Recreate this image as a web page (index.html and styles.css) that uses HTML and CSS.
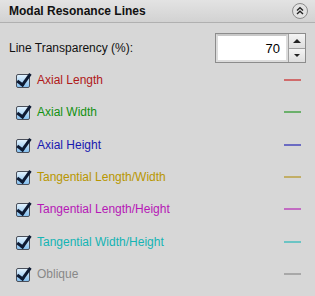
FILE: index.html
```html
<!DOCTYPE html>
<html lang="en">
<head>
    <meta charset="UTF-8">
    <title>Modal Resonance Lines</title>
    <link rel="stylesheet" href="styles.css">
</head>
<body>

<div class="panel">
    <div class="panel-header">
        <span class="panel-title">Modal Resonance Lines</span>
        <span class="collapse-btn">
            <svg width="16" height="16" viewBox="0 0 16 16">
                <circle cx="8" cy="8" r="7.5" fill="#e2e2e2" stroke="#8a8a8a"/>
                <path d="M5 7.5 L8 4.8 L11 7.5 M5 11 L8 8.3 L11 11" fill="none" stroke="#222" stroke-width="1.4"/>
            </svg>
        </span>
    </div>

    <div class="panel-body">
        <div class="transparency-row">
            <span class="label">Line Transparency (%):</span>
            <div class="spinner">
                <div class="spinner-field"><span>70</span></div>
                <div class="spinner-arrows">
                    <span class="arrow up"></span>
                    <span class="arrow down"></span>
                </div>
            </div>
        </div>

        <ul class="line-list">
            <li><span class="check"></span><span class="name axial-length">Axial Length</span><span class="swatch" style="background:#d06b6b"></span></li>
            <li><span class="check"></span><span class="name axial-width">Axial Width</span><span class="swatch" style="background:#6bb06b"></span></li>
            <li><span class="check"></span><span class="name axial-height">Axial Height</span><span class="swatch" style="background:#6b6bc2"></span></li>
            <li><span class="check"></span><span class="name tang-lw">Tangential Length/Width</span><span class="swatch" style="background:#c2ae66"></span></li>
            <li><span class="check"></span><span class="name tang-lh">Tangential Length/Height</span><span class="swatch" style="background:#c26bc2"></span></li>
            <li><span class="check"></span><span class="name tang-wh">Tangential Width/Height</span><span class="swatch" style="background:#6bc4c4"></span></li>
            <li><span class="check"></span><span class="name oblique">Oblique</span><span class="swatch" style="background:#a8a8a8"></span></li>
        </ul>
    </div>
</div>

</body>
</html>
```

FILE: styles.css
```css
body {
    margin: 0;
    padding: 0;
    background-color: #d7d7d7;
    font-family: "Liberation Sans", Arial, sans-serif;
    font-size: 12px;
    color: #000;
}

.panel {
    width: 315px;
    height: 296px;
    background-color: #d7d7d7;
}

.panel-header {
    height: 22px;
    display: flex;
    align-items: center;
    justify-content: space-between;
    padding: 0 9px;
    background: linear-gradient(#e3e3e3, #d2d2d2);
    border-bottom: 1px solid #b0b0b0;
}

.panel-title {
    font-weight: bold;
    font-size: 12px;
    color: #111;
}

.collapse-btn {
    display: flex;
    margin-right: -2px;
}

.panel-body {
    padding: 10px 14px 0 9px;
}

.transparency-row {
    display: flex;
    align-items: center;
    justify-content: space-between;
    height: 30px;
}

.label {
    color: #111;
}

.spinner {
    display: flex;
    border: 1px solid #8c8c8c;
    height: 28px;
    margin-right: -5px;
}

.spinner-field {
    width: 72px;
    background: #fff;
    border: 2px solid #dcdcdc;
    border-top-color: #c8c8c8;
    display: flex;
    align-items: center;
    justify-content: flex-end;
    padding-right: 6px;
    box-sizing: border-box;
    font-size: 13px;
}

.spinner-arrows {
    width: 16px;
    display: flex;
    flex-direction: column;
    border-left: 1px solid #a0a0a0;
}

.arrow {
    flex: 1;
    display: flex;
    align-items: center;
    justify-content: center;
    background: linear-gradient(#f4f4f4, #dedede);
}

.arrow.up {
    border-bottom: 1px solid #a0a0a0;
}

.arrow.up::after {
    content: "";
    border-left: 4px solid transparent;
    border-right: 4px solid transparent;
    border-bottom: 4px solid #222;
}

.arrow.down::after {
    content: "";
    border-left: 3px solid transparent;
    border-right: 3px solid transparent;
    border-top: 3px solid #222;
}

.line-list {
    list-style: none;
    margin: 0;
    padding: 0;
}

.line-list li {
    display: flex;
    align-items: center;
    height: 32.3px;
    padding-left: 7px;
}

.line-list li:first-child {
    margin-top: 1px;
}

.check {
    width: 12px;
    height: 12px;
    border: 1px solid #4a4f5a;
    border-radius: 2px;
    background: linear-gradient(#e2f2fe, #86c0ef);
    position: relative;
    margin-right: 7px;
    margin-top: 2px;
}

.check::after {
    content: "";
    position: absolute;
    left: 3px;
    top: -4px;
    width: 5px;
    height: 12px;
    border: solid #0d1a33;
    border-width: 0 3px 3px 0;
    transform: rotate(36deg);
}

.name {
    flex: 1;
}

.axial-length { color: #b01818; }
.axial-width { color: #119111; }
.axial-height { color: #1818b0; }
.tang-lw { color: #b89600; }
.tang-lh { color: #b618b6; }
.tang-wh { color: #14b4b4; }
.oblique { color: #888; }

.swatch {
    width: 17px;
    height: 2px;
}
```
